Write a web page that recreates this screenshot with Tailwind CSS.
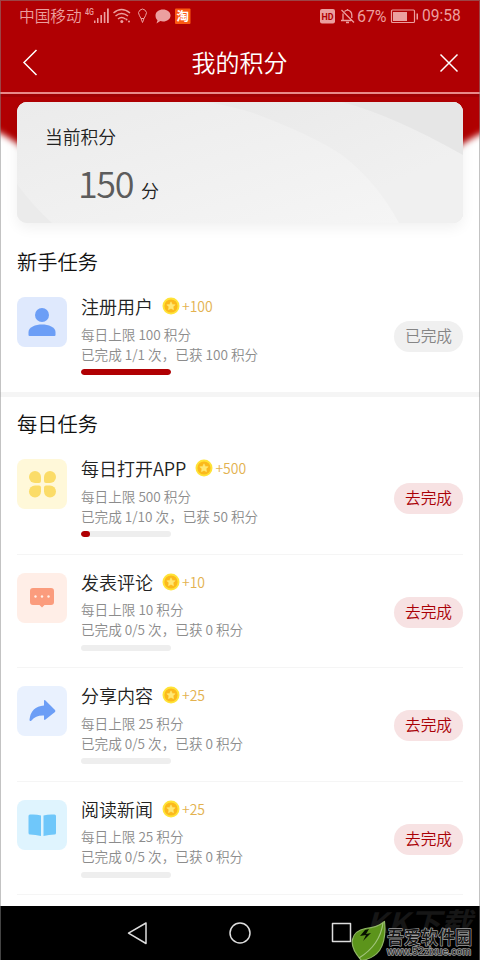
<!DOCTYPE html>
<html lang="zh-CN">
<head>
<meta charset="utf-8">
<title>我的积分</title>
<script src="https://cdn.jsdelivr.net/npm/@tailwindcss/browser@4"></script>
</head>
<body class="bg-white">
<svg class="hidden">
  <symbol id="coin" viewBox="0 0 18 18"><circle cx="9" cy="9" r="8.500" fill="#ffe337"/><circle cx="9" cy="9" r="6.600" fill="#fbb91c"/><path d="M9 4.800l1.300 2.600 2.900.4-2.100 2 .5 2.900L9 11.400l-2.600 1.300.5-2.900-2.100-2 2.900-.4z" fill="#ffe873" stroke="#ffe873" stroke-width=".5" stroke-linejoin="round"/></symbol>
</svg>
<div class="relative flex h-[960px] w-[480px] flex-col overflow-hidden bg-white font-['Noto_Sans_CJK_SC',sans-serif] font-[350]">
  <header class="relative h-[94px] shrink-0 border-b-2 border-[#e88a8a] bg-[#b00003] text-white">
    <div class="flex h-[32px] items-center pl-[19px] pr-[18px] text-[15.700px] leading-none text-[#eb9f9f]">
      <span class="w-[64px] whitespace-nowrap">中国移动</span>
      <svg class="shrink-0" width="110" height="32" viewBox="83 0 110 32" fill="#eb9f9f">
        <text x="85" y="15" font-size="8.500" font-family="Roboto" font-weight="500" textLength="9" lengthAdjust="spacingAndGlyphs">4G</text>
        <path d="M94 20.500h1.500V23H94zM97 18h1.500v5H97zM100.400 15h1.600v8h-1.600zM103.800 12h1.600v11h-1.600zM107 8.500h1.800V23H107z"/>
        <g fill="none" stroke="#eb9f9f" stroke-width="1.500"><path d="M113.500 13q8-7 16.500 0M115.500 16q6-5 12.500 0M118 19q3.500-3 7.500 0"/><path d="M141 18.500h3l1.700-3.200a3.900 3.900 0 1 0-6.400 0zM141 18.500l1.500 4 1.500-4" stroke-width="1"/></g>
        <circle cx="121.800" cy="21.500" r="1.500"/><circle cx="129" cy="21.500" r="1"/><circle cx="126.500" cy="19.500" r="1"/>
        <path d="M163 9.500c4.200 0 7.500 2.500 7.500 6s-3.300 6-7.500 6c-1 0-1.900-.1-2.700-.4l-3.800 2.400 1-3.300c-1.300-1.100-2-2.800-2-4.700 0-3.500 3.300-6 7.500-6z"/>
        <rect x="175" y="8.500" width="15.500" height="15.500" rx="1" fill="#fb5a12"/>
        <text x="176.500" y="21" font-size="12.500" font-weight="700" font-family="Noto Sans CJK SC" fill="#fff">淘</text>
      </svg>
      <span class="flex-1"></span>
      <svg class="shrink-0" width="38" height="32" viewBox="318 0 38 32" fill="none" stroke="#eb9f9f" stroke-width="1.300">
        <rect x="319" y="9" width="15" height="14.500" rx="2" fill="#eb9f9f" stroke="none"/>
        <text x="320.500" y="19.800" font-size="9.500" font-weight="700" font-family="Roboto" fill="#b00003" stroke="none" textLength="12" lengthAdjust="spacingAndGlyphs">HD</text>
        <path d="M340.500 10l12.500 12.500M340 20.500h10M342 20v-6.500M343.500 11.500q3-2.800 6 0 1.300 1.500 1.300 3.500v3M346.500 9v1.500M345 22.500h3"/>
      </svg>
      <span class="w-[33px] whitespace-nowrap pt-[1px] font-[Roboto,sans-serif] text-[16px] font-normal tracking-[-.1px]">67%</span>
      <svg class="shrink-0" width="32" height="32" viewBox="389 0 32 32"><rect x="390.500" y="10" width="23" height="12.500" rx="1" fill="none" stroke="#eb9f9f" stroke-width="1.200"/><path d="M392 12h14v9h-14zM415.500 13.500h1.500v6h-1.500z" fill="#eb9f9f"/></svg>
      <span class="w-[40px] whitespace-nowrap pt-[1px] font-[Roboto,sans-serif] text-[15.600px] font-normal">09:58</span>
    </div>
    <div class="flex h-[60px] items-center justify-between pl-[22px] pr-[21px]">
      <svg width="18" height="28" viewBox="0 0 18 28" fill="none" stroke="#fff" stroke-width="1.500"><path d="M14.500 2L2 14.500 14.500 27"/></svg>
      <h1 class="-mt-[1px] text-[24px] leading-none">我的积分</h1>
      <svg class="mt-[2px]" width="20" height="20" viewBox="0 0 20 20" fill="none" stroke="#fff" stroke-width="1.500"><path d="M1.500 1.500l17 17M18.500 1.500l-17 17"/></svg>
    </div>
  </header>
  <section class="relative h-[150px] shrink-0 px-[17px] pt-2">
    <svg class="absolute left-0 top-0" width="480" height="64" viewBox="0 0 480 64"><defs><filter id="soft" x="-5%" y="-20%" width="110%" height="140%"><feGaussianBlur stdDeviation="3"/></filter></defs><path d="M-10-12H490V36Q475 41 455 55H25Q8 42-10 34z" fill="#b00003" filter="url(#soft)"/><path d="M0 0h480v26H0z" fill="#b00003"/><path d="M0 0h480v3H0z" fill="#a00003"/></svg>
    <div class="relative h-[121px] overflow-hidden rounded-[10px] bg-[#eee] shadow-[0_5px_14px_rgba(0,0,0,.06)]">
      <svg class="absolute inset-0" width="446" height="121" viewBox="0 0 446 121"><defs><linearGradient id="g" x1="0" y1="0" x2="1" y2="1"><stop stop-color="#ebebeb"/><stop offset="1" stop-color="#f5f5f5"/></linearGradient><linearGradient id="m" x1="0" y1="0" x2="1" y2="1"><stop stop-color="#e9e9e9"/><stop offset=".7" stop-color="#f0f0f0"/></linearGradient></defs><path d="M0 0H446V121H0z" fill="#ebebeb"/><path d="M190 0H446V121H370z" fill="url(#m)"/><path d="M0 0H190Q223 6 239 12 295 33 325 53 360 80 382 121H35Q15 103 0 82z" fill="url(#g)"/><path d="M325 0H446V53Q375 13 325 0z" fill="#e6e6e6"/></svg>
      <div class="relative pl-7 pt-[24px] text-[#222]">
        <div class="text-[17.800px] leading-5">当前积分</div>
        <div class="flex items-baseline pl-[33px] pt-[14px] leading-[44px]"><span class="w-[55px] whitespace-nowrap text-[36px] font-[350] tracking-[-1.400px] text-[#5c5c5c]">150</span><span class="ml-[8px] text-[18px]">分</span></div>
      </div>
    </div>
  </section>
  <main id="tasks" class="flex-1"></main>
  <nav class="relative flex h-[54px] shrink-0 items-center bg-black">
    <svg width="480" height="54" viewBox="0 0 480 54" fill="none" stroke="#ddd" stroke-width="1.500" stroke-linejoin="round"><path d="M146 17v20.500l-17.500-10.300z"/><circle cx="240" cy="27" r="10"/><path d="M332.500 17.500h18v18h-18z"/>
      <text x="366" y="27" font-size="28" font-weight="700" font-style="italic" font-family="Noto Sans CJK SC" fill="#161616" stroke="none" textLength="106" lengthAdjust="spacingAndGlyphs">KK下载</text>
      <path d="M384.500 15.500q2 18-5 29-6 8-18 10-11-12-9-21 2-9 13-11 12-1 19-7z" fill="#5c941b" stroke="#8fb564" stroke-width="1.200"/><path d="M383 17Q380 39 359 52" stroke="#a2c47d" stroke-width="1.200"/><path d="M365 24l-5 6 6-1-3 6 8-8-5 1 3-5z" fill="#071000" stroke="none"/>
      <text x="387" y="38" font-size="18" font-weight="500" font-family="Noto Sans CJK SC" fill="#151515" stroke="#a0a0a0" stroke-width="1.400" paint-order="stroke" textLength="85" lengthAdjust="spacingAndGlyphs">吾爱软件园</text>
      <text x="387" y="49" font-size="10.500" font-family="Liberation Sans" fill="#222" stroke="#a0a0a0" stroke-width="1.500" paint-order="stroke" textLength="84" lengthAdjust="spacingAndGlyphs">www.52zixue.com</text>
    </svg>
  </nav>
  <div class="pointer-events-none absolute inset-0 border-x border-t border-[#888]/50"></div>
</div>
<script>
const icons = {
  user: '<circle cx="25" cy="18" r="7" fill="#6c9ef6"/><path d="M11.500 38v-3c0-5 7-7.500 13.500-7.500S38.500 30 38.500 35v3q0 1-1 1h-25q-1 0-1-1z" fill="#6c9ef6"/>',
  petals: '<g fill="#fbdc68"><path d="M18 12a6 6 0 0 1 6 6v4q0 2-2 2h-4a6 6 0 0 1 0-12z"/><path d="M33 12a6 6 0 0 1 0 12h-4q-2 0-2-2v-4a6 6 0 0 1 6-6z"/><path d="M18 38.500a6 6 0 0 0 6-6v-4q0-2-2-2h-4a6 6 0 0 0 0 12z"/><path d="M33 38.500a6 6 0 0 0 0-12h-4q-2 0-2 2v4a6 6 0 0 0 6 6z"/></g>',
  chat: '<path d="M16 15h18q3 0 3 3v11q0 3-3 3h-6.500L25 34.500 22.500 32H16q-3 0-3-3V18q0-3 3-3z" fill="#fb9c7d"/><g fill="#fff0e8"><circle cx="18.500" cy="23.500" r="1.200"/><circle cx="25" cy="23.500" r="1.200"/><circle cx="31.500" cy="23.500" r="1.200"/></g>',
  share: '<path d="M27 15q0-1.500 1.500-.5l9.500 9.500q.8 1 0 2l-9.500 7.500q-1.500 1-1.500-.5v-3.500q-8-.5-12.500 5-2 1.500-2-1 1.500-13 14.500-14z" fill="#6c9ef6"/>',
  book: '<g fill="#6fc7fa"><path d="M13 14.500q6-.5 11 1V36q-5.500-1.500-11-1.500-1.500 0-1.500-1.500V16q0-1.500 1.500-1.500zM37.500 14.500q-6-.5-11 1V36q5.500-1.500 11-1.500 1.500 0 1.500-1.500V16q0-1.500-1.500-1.500z"/></g>'
};
const row = t => `<article class="flex h-[113.5px] items-start pt-[18px] ${t.line ? 'border-b border-[#f5f5f5]' : ''}">
  <svg class="shrink-0 rounded-[8px] ${t.bg}" width="50" height="50" viewBox="0 0 50 50">${icons[t.icon]}</svg>
  <div class="-mt-[1px] ml-[14px] flex-1">
    <div class="flex h-[20px] items-center text-[18px] leading-[20px] text-[#222]"><span>${t.name}</span><svg class="ml-[9px] shrink-0" width="18" height="18"><use href="#coin"/></svg><span class="ml-[2px] text-[14px] text-[#e3b24f]">${t.coins}</span></div>
    <div class="mt-[7.5px] whitespace-nowrap text-[13.600px] leading-[20px] text-[#8c8c8c]"><p>每日上限 ${t.max} 积分</p><p>已完成 ${t.done} 次，已获 ${t.got} 积分</p></div>
    <div class="mt-[5.5px] h-[6px] w-[90px] overflow-hidden rounded-full bg-[#eee]"><div class="h-full rounded-full bg-[#b00003]" style="width:${t.pct}%"></div></div>
  </div>
  <div class="mt-[24px] flex h-[31px] w-[69px] items-center justify-center rounded-full pb-[1px] text-[15.700px] leading-none ${t.line ? 'bg-[#f7e2e3] text-[#a90006]' : 'bg-[#f0f0f0] text-[#858585]'}">${t.line ? '去完成' : '已完成'}</div>
</article>`;
const daily = [
  {icon:'petals',bg:'bg-[#fff8d9]',name:'每日打开APP',coins:'+500',max:500,done:'1/10',got:50,pct:10,line:1},
  {icon:'chat',bg:'bg-[#ffeee7]',name:'发表评论',coins:'+10',max:10,done:'0/5',got:0,pct:0,line:1},
  {icon:'share',bg:'bg-[#e9f1fe]',name:'分享内容',coins:'+25',max:25,done:'0/5',got:0,pct:0,line:1},
  {icon:'book',bg:'bg-[#dff4fe]',name:'阅读新闻',coins:'+25',max:25,done:'0/5',got:0,pct:0,line:1}
];
document.getElementById('tasks').innerHTML = `<section class="h-[153px] border-b-5 border-[#f5f5f5] px-[17px]"><h2 class="h-[35px] text-[20.300px] leading-[34px] text-[#111]">新手任务</h2>${row({icon:'user',bg:'bg-[#dfe9fd]',name:'注册用户',coins:'+100',max:100,done:'1/1',got:100,pct:100})}</section><section class="px-[17px] pt-[9px]"><h2 class="h-[35px] text-[20.300px] leading-[34px] text-[#111]">每日任务</h2>${daily.map(row).join('')}</section>`;
</script>
</body>
</html>
